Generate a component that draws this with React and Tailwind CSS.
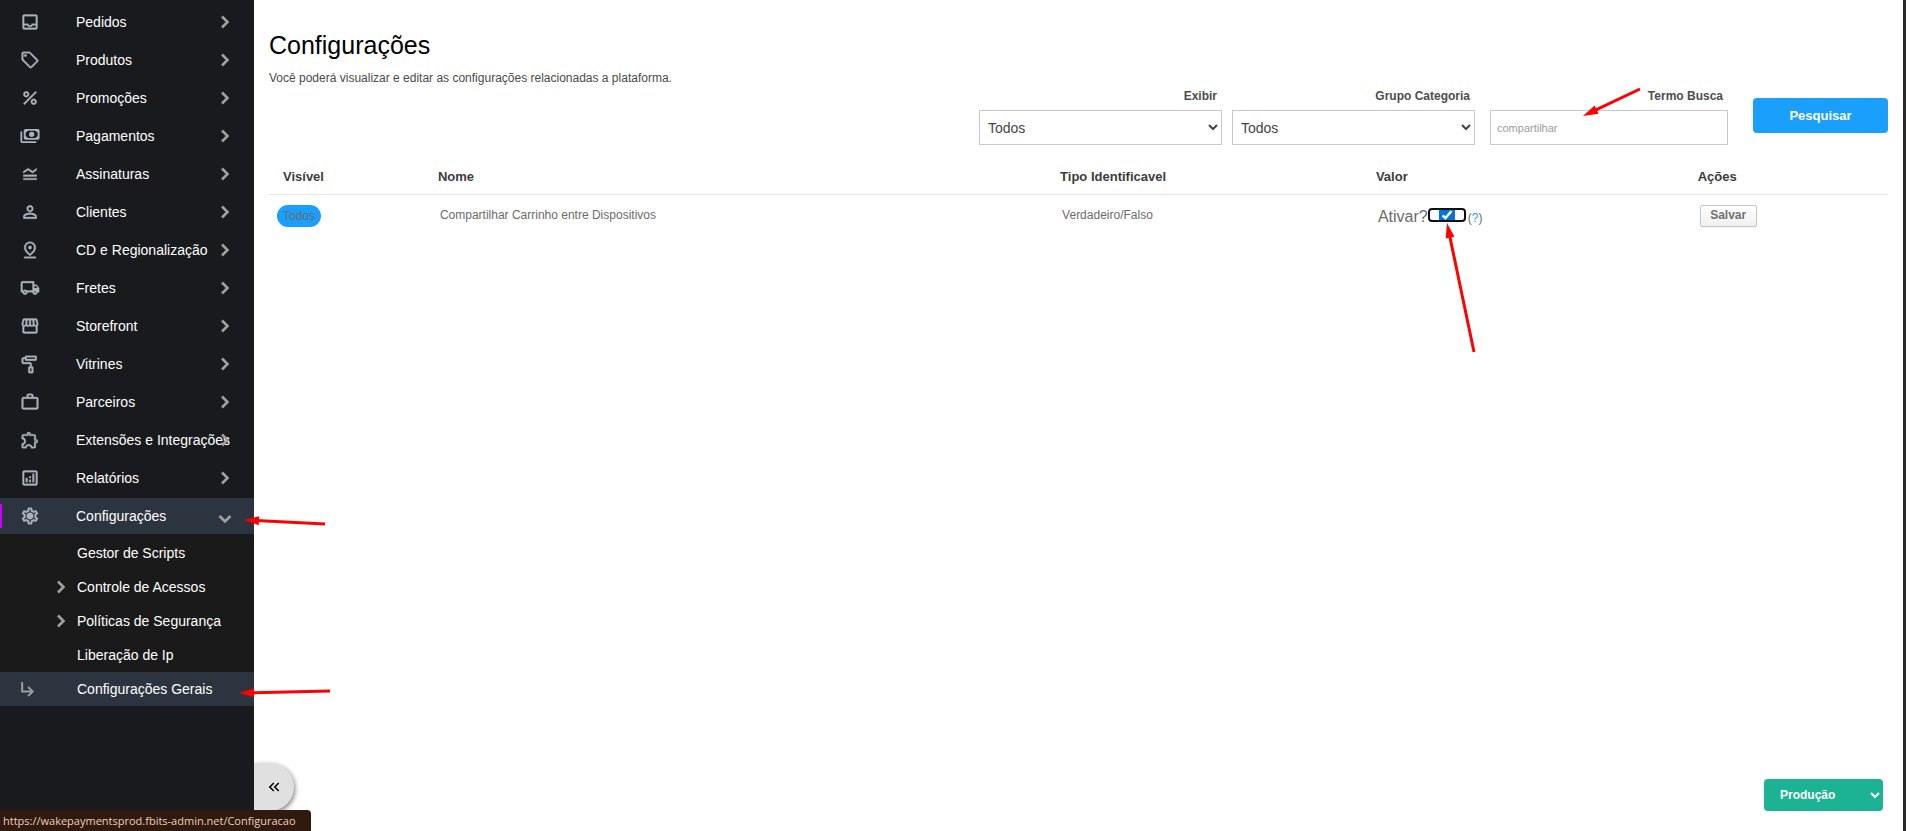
import React, { useState } from 'react';
import {
  MdOutlineInbox, MdOutlineSell, MdPercent, MdLegendToggle, MdPersonOutline,
  MdOutlinePinDrop, MdOutlineLocalShipping, MdOutlineStorefront, MdOutlineImagesearchRoller,
  MdWorkOutline, MdOutlineExtension, MdOutlineAnalytics, MdOutlineSettings,
  MdSubdirectoryArrowRight, MdKeyboardDoubleArrowLeft,
} from 'react-icons/md';

function PaymentsIcon({ className }) {
  return (
    <svg viewBox="0 0 24 24" fill="currentColor" className={className}>
      <path d="M0.5 6.5H2.7V18.3H19.5V20.5H2.5Q0.5 20.5 0.5 18.5Z" />
      <path fillRule="evenodd" d="M6.5 3.5H21.5Q23.5 3.5 23.5 5.5V14.5Q23.5 16.5 21.5 16.5H6.5Q4.5 16.5 4.5 14.5V5.5Q4.5 3.5 6.5 3.5ZM9.5 5.7L6.8 8V12L9.5 14.3H18.5L21.2 12V8L18.5 5.7Z" />
      <circle cx="14" cy="10" r="3.2" />
    </svg>
  );
}

function SettingsIcon({ className, strokeWidth }) {
  return (
    <svg viewBox="0 0 24 24" className={className}>
      <MdOutlineSettings size={24} strokeWidth={strokeWidth} />
      <circle cx="12" cy="12" r="3.5" fill="currentColor" />
    </svg>
  );
}

const MENU = [
  { label: 'Pedidos', icon: MdOutlineInbox },
  { label: 'Produtos', icon: MdOutlineSell },
  { label: 'Promoções', icon: MdPercent },
  { label: 'Pagamentos', icon: PaymentsIcon },
  { label: 'Assinaturas', icon: MdLegendToggle },
  { label: 'Clientes', icon: MdPersonOutline },
  { label: 'CD e Regionalização', icon: MdOutlinePinDrop },
  { label: 'Fretes', icon: MdOutlineLocalShipping },
  { label: 'Storefront', icon: MdOutlineStorefront },
  { label: 'Vitrines', icon: MdOutlineImagesearchRoller },
  { label: 'Parceiros', icon: MdWorkOutline },
  { label: 'Extensões e Integrações', icon: MdOutlineExtension },
  { label: 'Relatórios', icon: MdOutlineAnalytics },
  { label: 'Configurações', icon: SettingsIcon, open: true },
];

const SUBMENU = [
  { label: 'Gestor de Scripts' },
  { label: 'Controle de Acessos', nested: true },
  { label: 'Políticas de Segurança', nested: true },
  { label: 'Liberação de Ip' },
  { label: 'Configurações Gerais', active: true },
];

// from = tail, to = tip
const ARROWS = [
  { from: [1640, 89], to: [1583, 116] },
  { from: [1474, 352], to: [1447, 223] },
  { from: [325, 524], to: [244, 520] },
  { from: [330, 691], to: [239, 693] },
];

function Chevron({ className }) {
  return (
    <svg viewBox="0 0 12 14" fill="none" stroke="currentColor" strokeWidth="2.6" className={`h-3.5 w-3 ${className}`}>
      <path d="M3 1.5L8.5 7L3 12.5" />
    </svg>
  );
}

function Arrow({ from, to }) {
  const dx = to[0] - from[0];
  const dy = to[1] - from[1];
  const len = Math.hypot(dx, dy);
  const angle = (Math.atan2(dy, dx) * 180) / Math.PI;
  return (
    <g transform={`translate(${from[0]} ${from[1]}) rotate(${angle})`}>
      <path d={`M0 0H${len - 12}`} stroke="#ff0000" strokeWidth="3" />
      <path d={`M${len} 0L${len - 15} -4.5V4.5Z`} fill="#ff0000" />
    </g>
  );
}

function Sidebar() {
  return (
    <aside className="relative w-[254px] shrink-0 bg-[#181a1e] pt-1 text-sm text-white">
      <nav>
        <ul className="flex flex-col gap-0.5">
          {MENU.map(({ label, icon: Icon, open }) => (
            <li key={label}>
              <a href="#" className={`relative flex h-9 items-center pl-5 ${open ? 'bg-[#2c353f]' : ''}`}>
                {open && <span className="absolute left-0 top-1.5 h-6 w-0.5 bg-[#c800ff]" />}
                {/* the icons carry an empty 24x24 frame path, keep it unstroked */}
                <Icon strokeWidth="0.4" className="size-5 shrink-0 text-[#a9b1bb] [&_[fill=none]]:stroke-none" />
                <span className="ml-9 whitespace-nowrap">{label}</span>
                <Chevron className={`absolute right-[23px] text-[#a0a0a0] ${open ? 'top-3.5 rotate-90' : 'top-[11px]'}`} />
              </a>
            </li>
          ))}
        </ul>
        <ul className="bg-[#1a1a1a] pt-0.5">
          {SUBMENU.map(({ label, nested, active }) => (
            <li key={label}>
              <a href="#" className={`flex h-[34px] items-center ${active ? 'bg-[#2c353f]' : ''}`}>
                <span className="flex w-[77px] shrink-0 items-center pl-[18px]">
                  {active && (
                    <MdSubdirectoryArrowRight strokeWidth="0.4" className="size-5 text-[#a0a0a0] [&_[fill=none]]:stroke-none" />
                  )}
                  {nested && <Chevron className="ml-[37px] text-[#a0a0a0]" />}
                </span>
                <span className="whitespace-nowrap">{label}</span>
              </a>
            </li>
          ))}
        </ul>
      </nav>
      <button
        aria-label="Recolher menu"
        className="absolute bottom-5 left-full flex h-12 w-10 items-center justify-center rounded-r-full bg-[#e0e0e0] text-black shadow-[1px_2px_5px_rgba(0,0,0,0.5)] [clip-path:inset(-8px_-8px_-8px_0)]"
      >
        <MdKeyboardDoubleArrowLeft className="size-[18px]" />
      </button>
    </aside>
  );
}

function Filters() {
  const [termo, setTermo] = useState('');
  return (
    <form className="flex justify-end text-xs" onSubmit={(e) => e.preventDefault()}>
      <div className="mr-2.5 flex w-[243px] flex-col">
        <label htmlFor="exibir" className="mb-1.5 pr-[5px] text-right font-bold leading-4 text-[#4d4d4d]">Exibir</label>
        <select id="exibir" className="h-[35px] border border-[#c9c9c9] bg-white px-1 text-sm text-[#444]">
          <option>Todos</option>
        </select>
      </div>
      <div className="mr-[15px] flex w-[243px] flex-col">
        <label htmlFor="grupo" className="mb-1.5 pr-[5px] text-right font-bold leading-4 text-[#4d4d4d]">Grupo Categoria</label>
        <select id="grupo" className="h-[35px] border border-[#c9c9c9] bg-white px-1 text-sm text-[#444]">
          <option>Todos</option>
        </select>
      </div>
      <div className="mr-[25px] flex w-[238px] flex-col">
        <label htmlFor="termo" className="mb-1.5 pr-[5px] text-right font-bold leading-4 text-[#4d4d4d]">Termo Busca</label>
        <input
          id="termo"
          type="text"
          value={termo}
          onChange={(e) => setTermo(e.target.value)}
          placeholder="compartilhar"
          className="h-[35px] border border-[#c9c9c9] bg-white px-1.5 text-[11px] placeholder:text-[#9c9c9c]"
        />
      </div>
      <button className="mt-2.5 h-[35px] w-[135px] rounded-sm bg-[#1a9ffc] text-[13px] font-bold text-white">Pesquisar</button>
    </form>
  );
}

function ConfigTable() {
  const [ativo, setAtivo] = useState(true);
  return (
    <table className="mt-3 w-full table-fixed text-left text-xs text-[#6b6b6b]">
      <thead>
        <tr className="h-[37px] border-b border-[#e5e5e5] text-[13px] text-[#3c3c3c]">
          <th className="w-[10%] pl-3.5 pt-0.5">Visível</th>
          <th className="w-[38%] pl-[7px] pt-0.5">Nome</th>
          <th className="w-[20%] pl-3.5 pt-0.5">Tipo Identificavel</th>
          <th className="w-[20%] pl-1.5 pt-0.5">Valor</th>
          <th className="w-[12%] pl-1 pt-0.5">Ações</th>
        </tr>
      </thead>
      <tbody>
        <tr className="h-[42px]">
          <td className="pl-2 pt-0.5">
            <span className="flex h-[22px] w-11 items-center justify-center rounded-full bg-[#1a9ffc]">Todos</span>
          </td>
          <td className="pl-[9px]">Compartilhar Carrinho entre Dispositivos</td>
          <td className="pl-4">Verdadeiro/Falso</td>
          <td className="pl-2">
            <div className="flex items-center">
              <label htmlFor="ativar" className="pt-1 text-base">Ativar?</label>
              <span className="relative flex h-3.5 w-[38px]">
                <input
                  id="ativar"
                  type="checkbox"
                  checked={ativo}
                  onChange={(e) => setAtivo(e.target.checked)}
                  className="size-full appearance-none rounded border-2 border-[#101010] bg-white"
                />
                {ativo && (
                  <svg viewBox="0 0 16 10" className="pointer-events-none absolute left-[11px] top-0.5 h-2.5 w-4">
                    <path d="M0 0H16V10H0Z" fill="#0075d7" />
                    <path d="M3.5 5.5L6.5 8L12.5 1" fill="none" stroke="#fff" strokeWidth="2.4" />
                  </svg>
                )}
              </span>
              <span className="pl-0.5 pt-1.5">(<a href="#" className="text-[#1a9ffc]">?</a>)</span>
            </div>
          </td>
          <td className="pl-1.5 pt-0.5">
            <button className="h-[22px] w-[57px] rounded-xs border border-[#c6c6c6] bg-linear-to-b from-white to-[#f0f0f0] pb-0.5 text-xs font-bold text-[#707070] shadow-xs">
              Salvar
            </button>
          </td>
        </tr>
      </tbody>
    </table>
  );
}

export default function App() {
  return (
    <div className="relative flex min-h-screen bg-white font-['Liberation_Sans',Arial,sans-serif]">
      <Sidebar />

      <main className="min-w-0 flex-1 border-r-3 border-[#2b2b2b] pl-[15px] pr-[15px] pt-[29px]">
        <h1 className="text-[25px] leading-8 text-black">Configurações</h1>
        <p className="mt-[7px] text-xs leading-5 text-[#4a4a4a]">
          Você poderá visualizar e editar as configurações relacionadas a plataforma.
        </p>
        <Filters />
        <ConfigTable />
      </main>

      {/* Environment */}
      <select
        aria-label="Ambiente"
        className="absolute bottom-5 right-[23px] h-8 w-[119px] rounded bg-[#1bb394] pl-3 text-xs font-bold text-white"
      >
        <option>Produção</option>
      </select>

      {/* Link preview */}
      <div className="absolute bottom-0 left-0 h-[21px] rounded-tr bg-[#2f1a0f] pl-[3px] pr-[15px] font-['Open_Sans','Noto_Sans',sans-serif] text-[11px] leading-[21px] text-[#f0cdbb]">
        https://wakepaymentsprod.fbits-admin.net/Configuracao
      </div>

      {/* Annotations */}
      <svg className="pointer-events-none absolute inset-0 size-full">
        {ARROWS.map((a) => <Arrow key={a.from.join()} {...a} />)}
      </svg>
    </div>
  );
}
